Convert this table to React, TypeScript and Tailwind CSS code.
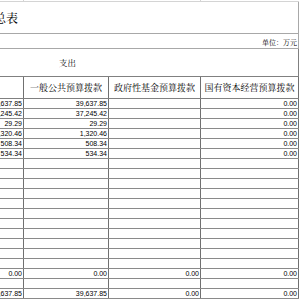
import React from "react";

const cjk = { fontFamily: '"Noto Serif CJK SC", "Noto Sans CJK SC", serif' };
const num = { fontFamily: '"Liberation Sans", Arial, sans-serif' };

type Row = [string, string, string, string];

const rows: Row[] = [
  ["39,637.85", "39,637.85", "", "0.00"],
  ["37,245.42", "37,245.42", "", "0.00"],
  ["29.29", "29.29", "", "0.00"],
  ["1,320.46", "1,320.46", "", "0.00"],
  ["508.34", "508.34", "", "0.00"],
  ["534.34", "534.34", "", "0.00"],
  ...Array.from({ length: 11 }, () => ["", "", "", ""] as Row),
  ["0.00", "0.00", "0.00", "0.00"],
  ["", "", "", ""],
  ["39,637.85", "39,637.85", "0.00", "0.00"],
];

const widths = ["w-[24px]", "w-[85px]", "w-[92px]", "w-[98px]"];

function Cell({ w, children }: { w: string; children?: React.ReactNode }) {
  return (
    <div
      className={`${w} shrink-0 h-full flex items-center justify-end pr-[1px] border-r border-[#707070] whitespace-nowrap`}
    >
      {children}
    </div>
  );
}

export default function App() {
  return (
    <div className="w-[300px] h-[300px] overflow-hidden bg-white text-black">
      <div className="w-[299px]">
        {/* top strip */}
        <div className="h-[2px] flex border-b border-[#d4d4d4]">
          <div className="w-[24px] border-r border-[#d4d4d4]" />
          <div className="w-[177px] border-r border-[#d4d4d4]" />
        </div>
        {/* title */}
        <div className="h-[32px] flex items-center border-b border-r border-[#a8a8a8]">
          <div className="w-[18px] flex justify-end">
            <span className="text-[12px] leading-none whitespace-nowrap" style={cjk}>
              汇总表
            </span>
          </div>
        </div>
        {/* unit */}
        <div className="h-[15px] flex items-end justify-end pr-[1px] pb-[2px] border-b border-r border-[#a8a8a8]">
          <span className="text-[7px] leading-none" style={cjk}>
            单位：万元
          </span>
        </div>
        {/* 支出 */}
        <div className="h-[28px] flex items-center pl-[59px] border-b border-r border-[#808080]">
          <span className="text-[8.5px] leading-none" style={cjk}>
            支出
          </span>
        </div>
        {/* header */}
        <div className="h-[22px] flex border-b border-[#808080]">
          <div className="w-[24px] shrink-0 border-r border-[#707070]" />
          {["一般公共预算拨款", "政府性基金预算拨款", "国有资本经营预算拨款"].map((t, i) => (
            <div
              key={t}
              className={`${widths[i + 1]} shrink-0 flex items-center justify-center border-r border-[#707070] whitespace-nowrap text-[9px] leading-none`}
              style={cjk}
            >
              {t}
            </div>
          ))}
        </div>
        {/* data rows */}
        {rows.map((r, i) => (
          <div key={i} className="h-[10px] flex border-b border-[#8a8a8a] text-[7px] leading-none" style={num}>
            {r.map((v, j) => (
              <Cell key={j} w={widths[j]}>
                {v}
              </Cell>
            ))}
          </div>
        ))}
      </div>
    </div>
  );
}
